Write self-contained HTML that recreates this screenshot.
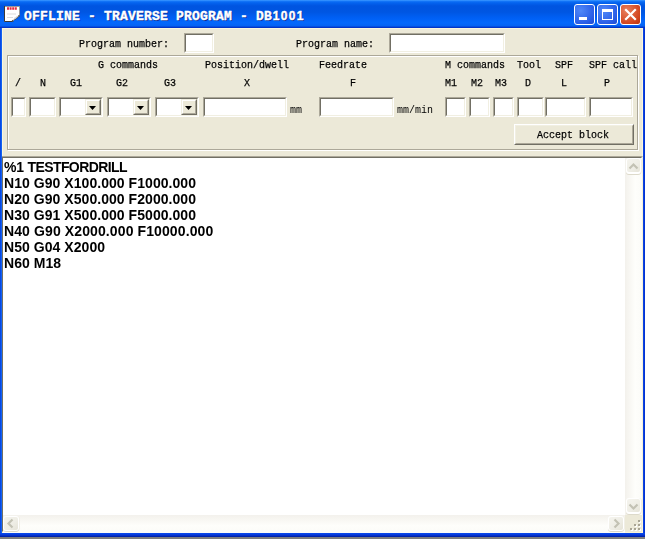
<!DOCTYPE html>
<html><head><meta charset="utf-8">
<style>
html,body{margin:0;padding:0;}
body{width:645px;height:539px;overflow:hidden;background:#7f7f7f;position:relative;font-family:"Liberation Mono",monospace;}
div,span{box-sizing:border-box;}
.abs{position:absolute;}
#win{left:0;top:0;width:645px;height:537px;background:#0b3fd6;}
#title{left:0;top:0;width:645px;height:28px;background:linear-gradient(to bottom,#3392ff 0px,#2a88fc 1px,#0c6ef5 1.6px,#0462ee 3px,#0054e0 6px,#0056e2 12px,#0060f5 18px,#0468fc 23px,#0562f2 26px,#0338cc 27.2px,#0230c0 28px);}
#lb{z-index:5;left:0;top:28px;width:2px;height:509px;background:linear-gradient(to right,#0848e4 50%,#1462f0 50%);}
#rb{z-index:5;left:643px;top:28px;width:2px;height:509px;background:linear-gradient(to right,#0a42e4 50%,#0434d0 50%);}
#bb{z-index:5;left:0;top:533px;width:645px;height:4px;background:linear-gradient(to bottom,#0a4cf0,#0538d8 50%,#001c9c);}
#client{left:2px;top:28px;width:641px;height:505px;background:#ece9d8;border:1px solid #faf6dc;}
.t{margin-top:0px;filter:grayscale(1);position:absolute;white-space:pre;font:11.5px/13px "Liberation Mono",monospace;color:#000;-webkit-text-stroke:0.25px #000;transform:scaleX(.8694);transform-origin:0 0;}
.in{position:absolute;background:#fff;border:1px solid;border-color:#aca899 #fff #fff #aca899;}
.in:before{content:"";position:absolute;left:0;top:0;right:0;bottom:0;border:1px solid;border-color:#716f64 #f1efe2 #f1efe2 #716f64;}
.cb{position:absolute;right:1px;top:1px;bottom:1px;width:16px;background:#ece9d8;border:1px solid;border-color:#f1efe2 #716f64 #716f64 #f1efe2;}
.cb:before{content:"";position:absolute;left:0;top:0;right:0;bottom:0;border:1px solid;border-color:#fff #aca899 #aca899 #fff;}
.cb:after{content:"";position:absolute;left:3px;top:6px;width:7px;height:4px;background:#000;clip-path:polygon(0 0,100% 0,50% 100%);}
#grp{left:7px;top:55px;width:631px;height:95px;border:1px solid #aca899;box-shadow:1px 1px 0 #fff, inset 1px 1px 0 #fff;}
#btn{left:514px;top:124px;width:120px;height:21px;background:#ece9d8;border:1px solid;border-color:#fff #716f64 #716f64 #fff;}
#btn:before{content:"";position:absolute;left:0;top:0;right:0;bottom:0;border:1px solid;border-color:#f1efe2 #aca899 #aca899 #f1efe2;}
#ta{left:1px;top:156px;width:642px;height:377px;background:#fff;border:1px solid;border-color:#aca899 #f5f0d6 #f5f0d6 #aca899;}
#ta:before{content:"";position:absolute;left:0;top:0;right:0;bottom:0;border:1px solid;border-color:#716f64 #f1efe2 #f1efe2 #716f64;}
#code{filter:grayscale(1);left:4px;top:159px;font:bold 14px/16px "Liberation Sans",sans-serif;color:#000;white-space:pre;letter-spacing:.05px;}
#vs{left:625px;top:158px;width:17px;height:357px;background:linear-gradient(to right,#f3f1ec,#fefefb 60%,#fbfbf8);}
#hs{left:3px;top:515px;width:622px;height:18px;background:linear-gradient(to bottom,#f3f1ec,#fefefb 60%,#fbfbf8);}
#corner{left:625px;top:515px;width:18px;height:18px;background:#ece9d8;border-right:1px solid #fbf5d8;border-bottom:1px solid #fbf5d8;}
.sb{position:absolute;border-radius:3px;background:#fff;box-shadow:0 1px 0 #dddacb,1px 0 0 #f1efe6;}
.sb i{position:absolute;left:1px;top:1px;right:1px;bottom:2px;border-radius:2px;background:linear-gradient(135deg,#f5f4ee,#eeede5 60%,#e5e3d7);}
.sb.h i{right:1px;bottom:1px;}
.sb svg{position:absolute;left:0;top:0;}
.wb{position:absolute;top:4px;width:21px;height:21px;border-radius:3px;border:1px solid #fff;}
</style></head><body>
<div id="win" class="abs"></div>
<div id="title" class="abs"></div>
<div id="lb" class="abs"></div><div id="rb" class="abs"></div><div id="bb" class="abs"></div>
<div id="client" class="abs"></div>

<!-- title icon -->
<svg class="abs" style="left:4px;top:6px" width="16" height="16" viewBox="0 0 16 16">
<path d="M0.5,0.5H15.5V9.5L8,15.5H0.5Z" fill="#fff" stroke="#9a9a9a" stroke-width="1"/>
<path d="M0.5,0V15.5H8" fill="none" stroke="#3a3a3a" stroke-width="1"/>
<path d="M15.5,9.5L8,15.5" fill="none" stroke="#333" stroke-width="1.3" stroke-dasharray="1.6 1"/>
<path d="M15,10L8.6,15L10.5,11.5Z" fill="#d8d8d8"/>
<path d="M3,2.5H13" stroke="#e8283c" stroke-width="2.4" stroke-dasharray="2 0.6"/>
<rect x="3" y="7.5" width="9" height="1" fill="#dcdcdc"/><rect x="3" y="11" width="6" height="1" fill="#dcdcdc"/>
</svg>
<div class="abs" id="ttext" style="left:24px;top:8px;-webkit-text-stroke:0.4px #fff;font:bold 13px/16px 'Liberation Mono',monospace;color:#fff;white-space:pre;letter-spacing:0.2px;text-shadow:1px 1px 0 #0a2a90;">OFFLINE - TRAVERSE PROGRAM - DB<span style="font:bold 12px/16px 'Liberation Sans',sans-serif;letter-spacing:1.33px;margin-left:.6px">1001</span></div>

<!-- window buttons -->
<div class="wb" style="left:574px;background:radial-gradient(circle at 30% 30%,#5088f8,#295de6 70%,#1f4bd0);"><div class="abs" style="left:4px;top:12px;width:8px;height:3px;background:#fff"></div></div>
<div class="wb" style="left:597px;background:radial-gradient(circle at 30% 30%,#5088f8,#295de6 70%,#1f4bd0);"><div class="abs" style="left:4px;top:4px;width:11px;height:11px;border:1px solid #fff;border-top:3px solid #fff"></div></div>
<div class="wb" style="left:620px;background:radial-gradient(circle at 30% 30%,#e8805e,#d2451e 70%,#b53310);"><svg class="abs" style="left:0;top:0" width="19" height="19"><path d="M5,5L14,14M14,5L5,14" stroke="#fff" stroke-width="2.2" stroke-linecap="square"/></svg></div>

<!-- top row -->
<div class="t" style="left:79px;top:37px">Program number:</div>
<div class="in" style="left:184px;top:33px;width:30px;height:20px"></div>
<div class="t" style="left:296px;top:37px">Program name:</div>
<div class="in" style="left:389px;top:33px;width:116px;height:20px"></div>

<div id="grp" class="abs"></div>
<div class="t" style="left:98px;top:58px">G commands</div>
<div class="t" style="left:205px;top:58px">Position/dwell</div>
<div class="t" style="left:319px;top:58px">Feedrate</div>
<div class="t" style="left:445px;top:58px">M commands</div>
<div class="t" style="left:517px;top:58px">Tool</div>
<div class="t" style="left:555px;top:58px">SPF</div>
<div class="t" style="left:589px;top:58px">SPF call</div>

<div class="t" style="left:15px;top:76px">/</div>
<div class="t" style="left:40px;top:76px">N</div>
<div class="t" style="left:70px;top:76px">G1</div>
<div class="t" style="left:116px;top:76px">G2</div>
<div class="t" style="left:164px;top:76px">G3</div>
<div class="t" style="left:244px;top:76px">X</div>
<div class="t" style="left:350px;top:76px">F</div>
<div class="t" style="left:445px;top:76px">M1</div>
<div class="t" style="left:471px;top:76px">M2</div>
<div class="t" style="left:495px;top:76px">M3</div>
<div class="t" style="left:525px;top:76px">D</div>
<div class="t" style="left:561px;top:76px">L</div>
<div class="t" style="left:604px;top:76px">P</div>

<div class="in" style="left:11px;top:97px;width:15px;height:20px"></div>
<div class="in" style="left:29px;top:97px;width:27px;height:20px"></div>
<div class="in" style="left:59px;top:97px;width:44px;height:20px"><div class="cb"></div></div>
<div class="in" style="left:107px;top:97px;width:44px;height:20px"><div class="cb"></div></div>
<div class="in" style="left:155px;top:97px;width:44px;height:20px"><div class="cb"></div></div>
<div class="in" style="left:203px;top:97px;width:84px;height:20px"></div>
<div class="t" style="left:290px;top:103px;-webkit-text-stroke:0">mm</div>
<div class="in" style="left:319px;top:97px;width:75px;height:20px"></div>
<div class="t" style="left:397px;top:103px;-webkit-text-stroke:0">mm/min</div>
<div class="in" style="left:445px;top:97px;width:21px;height:20px"></div>
<div class="in" style="left:469px;top:97px;width:21px;height:20px"></div>
<div class="in" style="left:493px;top:97px;width:21px;height:20px"></div>
<div class="in" style="left:517px;top:97px;width:27px;height:20px"></div>
<div class="in" style="left:545px;top:97px;width:41px;height:20px"></div>
<div class="in" style="left:589px;top:97px;width:44px;height:20px"></div>

<div id="btn" class="abs"></div>
<div class="t" style="left:537px;top:128px">Accept block</div>

<!-- text area -->
<div id="ta" class="abs"></div>
<div id="code" class="abs"><span style="letter-spacing:-.2px">%1 </span><span style="letter-spacing:-.6px">TESTFORDRILL</span>
N10 G90 X100.000 F1000.000
N20 G90 X500.000 F2000.000
N30 G91 X500.000 F5000.000
<span style="letter-spacing:.11px">N40 G90 X2000.000 F10000.000</span>
N50 G04 X2000
N60 M18</div>
<div id="vs" class="abs"></div><div id="hs" class="abs"></div><div id="corner" class="abs"></div>
<div class="sb" style="left:626px;top:158px;width:15px;height:16px"><i></i><svg width="15" height="16"><path d="M3.5,10.5L7.5,6.5L11.5,10.5" fill="none" stroke="#c3c2b4" stroke-width="2.2"/></svg></div>
<div class="sb" style="left:626px;top:498px;width:15px;height:16px"><i></i><svg width="15" height="16"><path d="M3.5,6.5L7.5,10.5L11.5,6.5" fill="none" stroke="#c3c2b4" stroke-width="2.2"/></svg></div>
<div class="sb h" style="left:3px;top:516px;width:16px;height:15px"><i></i><svg width="16" height="15"><path d="M9.5,3.5L5.5,7.5L9.5,11.5" fill="none" stroke="#c3c2b4" stroke-width="2.2"/></svg></div>
<div class="sb h" style="left:608px;top:516px;width:16px;height:15px"><i></i><svg width="16" height="15"><path d="M6.5,3.5L10.5,7.5L6.5,11.5" fill="none" stroke="#c3c2b4" stroke-width="2.2"/></svg></div>
<!-- grip -->
<svg class="abs" style="left:630px;top:520px" width="12" height="12"><g fill="#fff"><rect x="9" y="1" width="2" height="2"/><rect x="5" y="5" width="2" height="2"/><rect x="9" y="5" width="2" height="2"/><rect x="1" y="9" width="2" height="2"/><rect x="5" y="9" width="2" height="2"/><rect x="9" y="9" width="2" height="2"/></g><g fill="#a9a594"><rect x="8" y="0" width="2" height="2"/><rect x="4" y="4" width="2" height="2"/><rect x="8" y="4" width="2" height="2"/><rect x="0" y="8" width="2" height="2"/><rect x="4" y="8" width="2" height="2"/><rect x="8" y="8" width="2" height="2"/></g></svg>
</body></html>
